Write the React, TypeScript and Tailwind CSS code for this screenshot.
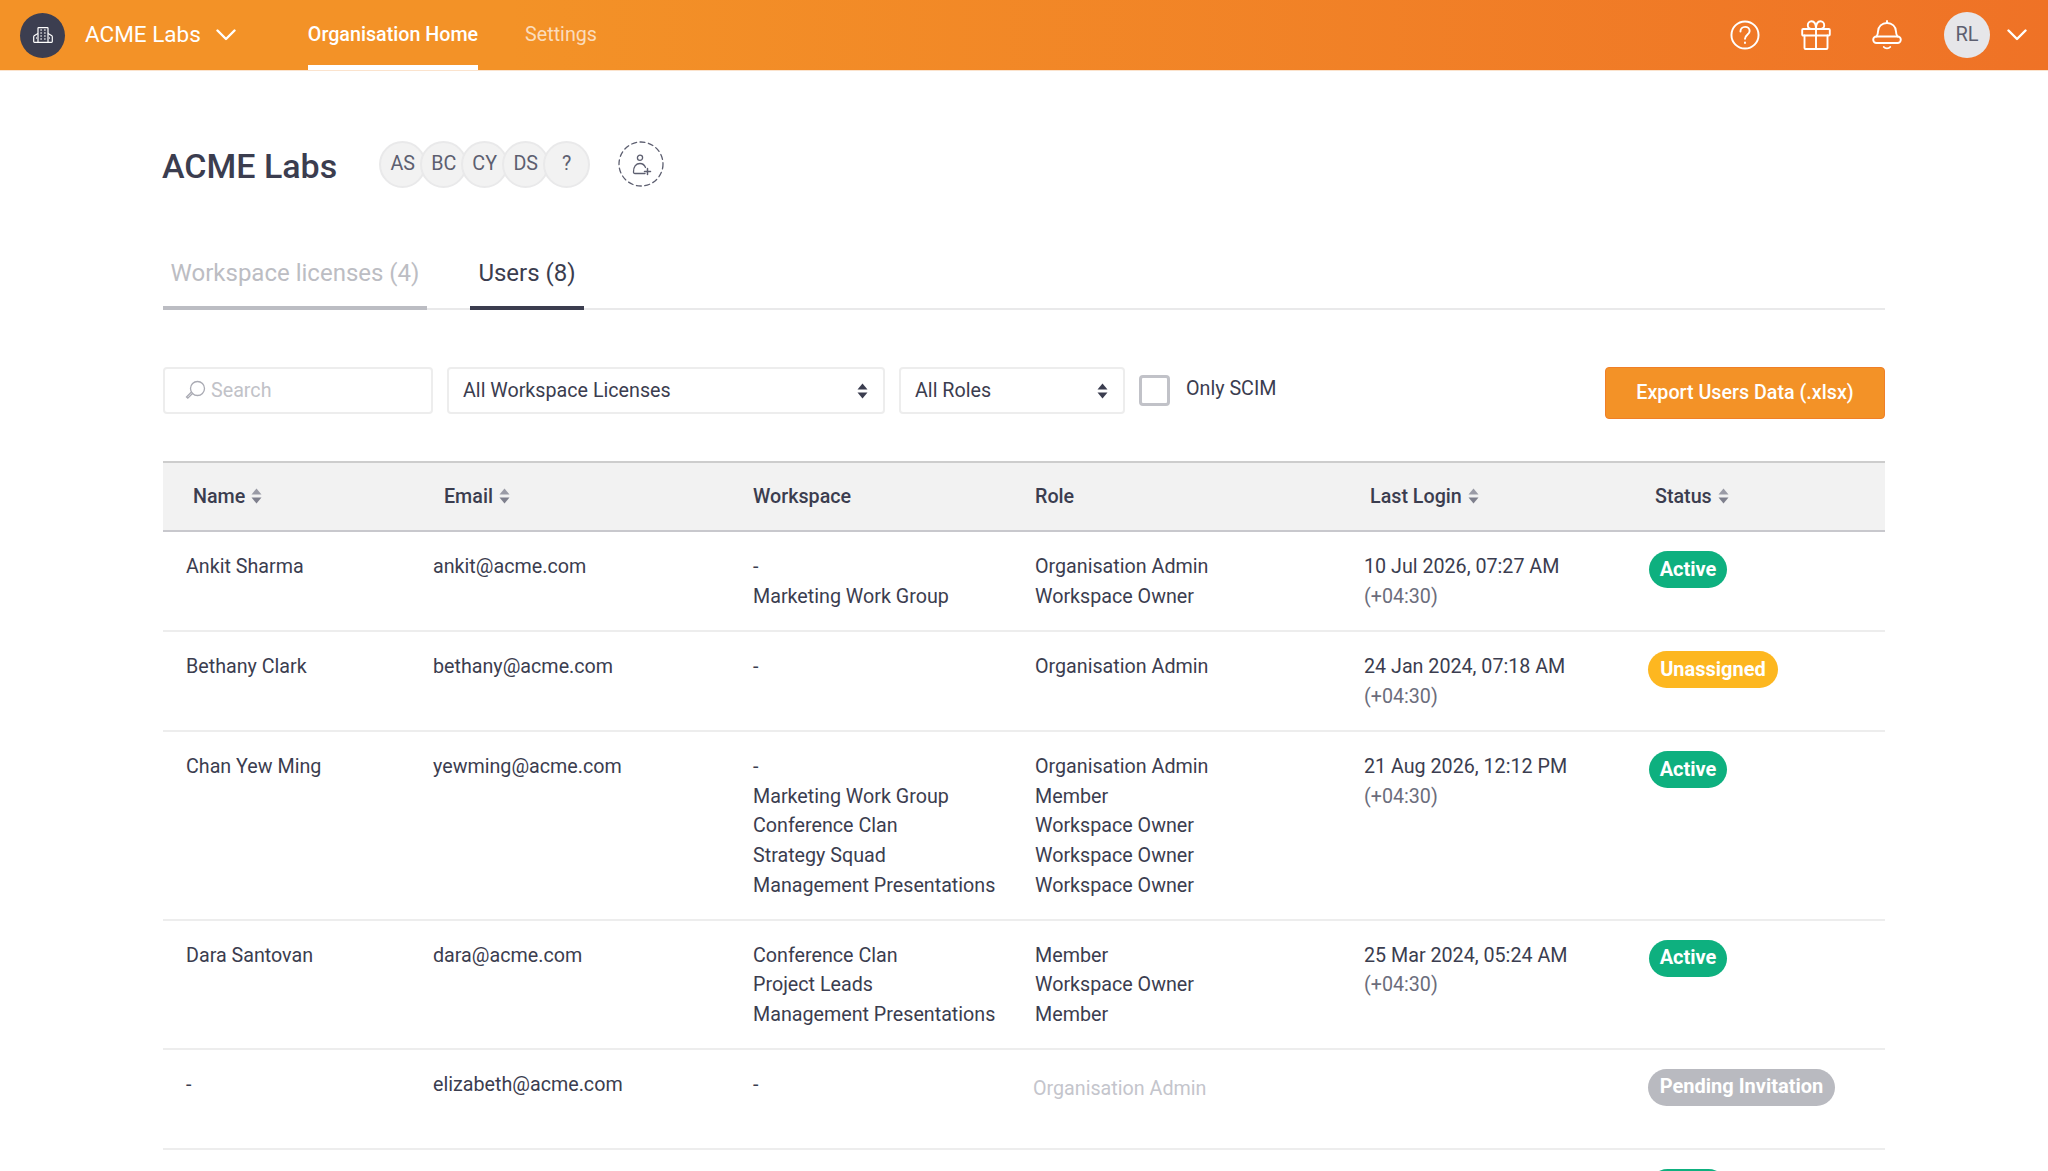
import React from "react";

const Sort = () => (
  <svg width="11" height="18" viewBox="0 0 11 18" className="ml-[6px] shrink-0">
    <path d="M5.5 1.5 L10.5 7.5 H0.5 Z" fill="#9a9ba6" />
    <path d="M0.5 10.5 H10.5 L5.5 16.5 Z" fill="#7f808d" />
  </svg>
);

const Updown = () => (
  <svg width="11" height="16" viewBox="0 0 11 16" className="shrink-0">
    <path d="M5.5 0.5 L10.5 6.5 H0.5 Z" fill="#3b3d4f" />
    <path d="M0.5 9.5 H10.5 L5.5 15.5 Z" fill="#3b3d4f" />
  </svg>
);

const Chevron = ({ w = 20 }: { w?: number }) => (
  <svg width={w} height={w * 0.6} viewBox="0 0 20 12" fill="none" stroke="#fff" strokeWidth="2.4" strokeLinecap="round" strokeLinejoin="round">
    <path d="M1.5 1.5 L10 10 L18.5 1.5" />
  </svg>
);

const Building = () => (
  <svg width="20" height="16" viewBox="0 0 20 16" fill="none" stroke="#fff" strokeWidth="1.2" strokeLinejoin="round">
    <path d="M5 15.4 V1.2 C5 .8 5.300 .6 5.600 .6 H14.400 C14.700 .6 15 .8 15 1.200 V15.400" />
    <path d="M5 6.500 L1.500 8.500 C1 8.800 .7 9.200 .7 9.800 V14.600 C.7 15.100 1 15.400 1.500 15.400 H18.500 C19 15.400 19.300 15.100 19.300 14.600 V9.800 C19.300 9.200 19 8.800 18.500 8.500 L15 6.500" />
    <path d="M7.500 3h1.200M11.300 3h1.200M7.500 6h1.200M11.300 6h1.200M7.500 9h1.200M11.300 9h1.200M7.500 12h1.200M11.300 12h1.200M3 11h.8M16.200 11h.8" strokeWidth="1.500" />
  </svg>
);

const Help = () => (
  <svg width="30" height="30" viewBox="0 0 31 31" fill="none" stroke="#fff" strokeWidth="2" strokeLinecap="round">
    <circle cx="15.5" cy="15.5" r="14" />
    <path d="M10.8 11.8c0-2.8 2.1-4.7 4.8-4.7 2.7 0 4.7 1.8 4.7 4.3 0 3.9-4.8 4-4.8 8" />
    <path d="M15.5 23.3v.4" />
  </svg>
);

const Gift = () => (
  <svg width="30" height="30" viewBox="0 0 30 30" fill="none" stroke="#fff" strokeWidth="1.9" strokeLinecap="round" strokeLinejoin="round">
    <rect x="1.200" y="9" width="27.600" height="6.500" rx="1" />
    <path d="M3.500 15.500 V28 C3.500 28.600 3.900 29 4.500 29 H25.500 C26.100 29 26.500 28.600 26.500 28 V15.500" />
    <path d="M15 9 V29" />
    <path d="M15 9 H10.500 C8.200 9 6.800 7.400 6.800 5.300 C6.800 3 8.500 1.200 10.500 1.200 C13 1.200 15 4 15 9 Z" />
    <path d="M15 9 H19.500 C21.800 9 23.200 7.400 23.200 5.300 C23.200 3 21.500 1.200 19.500 1.200 C17 1.200 15 4 15 9 Z" />
  </svg>
);

const Bell = () => (
  <svg width="30" height="30" viewBox="0 0 30 30" fill="none" stroke="#fff" strokeWidth="1.9" strokeLinecap="round" strokeLinejoin="round">
    <path d="M15 1 V3" />
    <path d="M4.500 16.500 C5.800 14.500 6 13 6 11.500 C6 6.500 10 3 15 3 C20 3 24 6.500 24 11.500 C24 13 24.200 14.500 25.500 16.500" />
    <rect x="1.200" y="16.500" width="27.600" height="6.500" rx="3.200" />
    <path d="M11.800 27 C13.300 28.800 16.700 28.800 18.200 27" />
  </svg>
);

const SearchIcon = () => (
  <svg width="21" height="21" viewBox="0 0 21 21" fill="none" stroke="#a9aab3" strokeWidth="1.3" strokeLinecap="round">
    <circle cx="12.5" cy="8.5" r="7" />
    <path d="M7.5 13.5 L2.8 18.2 L1.5 17 L6.200 12.300" />
  </svg>
);

const AddUser = () => (
  <svg width="46" height="46" viewBox="0 0 46 46" fill="none" stroke="#5d5f70" strokeWidth="1.3" strokeLinecap="round">
    <circle cx="23" cy="23" r="22" strokeDasharray="5 3.500" />
    <g transform="translate(14.500 14)">
      <circle cx="7.500" cy="2.800" r="2.600" />
      <path d="M12.500 18.500 H2.500 C1.500 18.500 1 18 1 17 C1 11.500 3.500 8.500 7.500 8.500 C10 8.500 12 10 13 12.500" />
      <path d="M15 13.500 V19.500 M12 16.500 H18" strokeWidth="1.500" />
    </g>
  </svg>
);

const Badge = ({ label, color, w }: { label: string; color: string; w: string }) => (
  <span className={`inline-flex h-[37px] items-center justify-center rounded-full text-[20px] font-bold text-white ${color} ${w}`}>
    {label}
  </span>
);

type Row = {
  name: string;
  email: string;
  workspace: string[];
  role: string[];
  disabledRole?: boolean;
  login?: string;
  status: "active" | "unassigned" | "pending";
};

const rows: Row[] = [
  { name: "Ankit Sharma", email: "ankit@acme.com", workspace: ["-", "Marketing Work Group"], role: ["Organisation Admin", "Workspace Owner"], login: "10 Jul 2026, 07:27 AM", status: "active" },
  { name: "Bethany Clark", email: "bethany@acme.com", workspace: ["-"], role: ["Organisation Admin"], login: "24 Jan 2024, 07:18 AM", status: "unassigned" },
  { name: "Chan Yew Ming", email: "yewming@acme.com", workspace: ["-", "Marketing Work Group", "Conference Clan", "Strategy Squad", "Management Presentations"], role: ["Organisation Admin", "Member", "Workspace Owner", "Workspace Owner", "Workspace Owner"], login: "21 Aug 2026, 12:12 PM", status: "active" },
  { name: "Dara Santovan", email: "dara@acme.com", workspace: ["Conference Clan", "Project Leads", "Management Presentations"], role: ["Member", "Workspace Owner", "Member"], login: "25 Mar 2024, 05:24 AM", status: "active" },
  { name: "-", email: "elizabeth@acme.com", workspace: ["-"], role: ["Organisation Admin"], disabledRole: true, status: "pending" },
];

const StatusBadge = ({ s }: { s: Row["status"] }) => {
  if (s === "active") return <Badge label="Active" color="bg-[#0eb07f]" w="w-[78px]" />;
  if (s === "unassigned") return <Badge label="Unassigned" color="bg-[#fdb720] -ml-[1px]" w="w-[130px]" />;
  return <Badge label="Pending Invitation" color="bg-[#b9bac0] -ml-[1px]" w="w-[187px]" />;
};

const COLS = "grid grid-cols-[278px_312px_282px_329px_285px_1fr]";

export default function App() {
  return (
    <div className="h-[1171px] overflow-hidden bg-white font-['Roboto',sans-serif] text-[19.7px] leading-[29.7px] text-[#3b3d4f]">
      <header className="flex h-[70px] items-center bg-gradient-to-r from-[#f39227] from-25% to-[#ef7226] pl-[20px] pr-[21px] shadow-[0_1px_0_#fbe3cd]">
        <div className="flex h-[45px] w-[45px] items-center justify-center rounded-full bg-[#3c3e50]">
          <Building />
        </div>
        <span className="ml-[20px] text-[22.5px] text-white">ACME Labs</span>
        <span className="ml-[15px]"><Chevron /></span>
        <nav className="ml-[72px] flex h-full items-stretch gap-[47px]">
          <a className="flex items-center border-b-[5px] border-white pt-[5px] font-medium text-white">Organisation Home</a>
          <a className="flex items-center text-white/70">Settings</a>
        </nav>
        <div className="ml-auto flex items-center">
          <Help />
          <span className="ml-[41px]"><Gift /></span>
          <span className="ml-[41px]"><Bell /></span>
          <div className="ml-[42px] flex h-[46px] w-[46px] items-center justify-center rounded-full bg-[#e6e6e9] text-[20px] text-[#5d5f70]">RL</div>
          <span className="ml-[17px]"><Chevron /></span>
        </div>
      </header>

      <main className="px-[163px]">
        <div className="mt-[71px] flex h-[46px] items-center">
          <h1 className="-ml-[1px] pt-[3px] text-[34px] font-medium leading-[40px]">ACME Labs</h1>
          <div className="ml-[42px] flex">
            {["AS", "BC", "CY", "DS", "?"].map((a, i) => (
              <div key={a} className={`flex h-[47px] w-[47px] items-center justify-center rounded-full border-2 border-[#e9e9ea] bg-[#f2f2f2] text-[#5d5f70] ${i ? "-ml-[6px]" : ""}`}>
                {a}
              </div>
            ))}
          </div>
          <div className="ml-[28px] h-[46px] w-[46px]">
            <AddUser />
          </div>
        </div>

        <div className="mt-[56px] flex h-[67px] items-stretch border-b-2 border-[#e9e9ea]">
          <div className="-mb-[2px] flex w-[264px] items-start justify-center border-b-[4px] border-[#bcbdc3] pt-[16px] text-[24px] text-[#bcbdc3]">Workspace licenses (4)</div>
          <div className="-mb-[2px] ml-[43px] flex w-[114px] items-start justify-center border-b-[4px] border-[#3b3d4f] pt-[16px] text-[24px]">Users (8)</div>
        </div>

        <div className="mt-[57px] flex items-start">
          <div className="flex h-[47px] w-[270px] items-center rounded-[4px] border-2 border-[#ededed] pl-[20px] text-[#c1c2c8]">
            <SearchIcon />
            <span className="ml-[5px]">Search</span>
          </div>
          <div className="ml-[14px] flex h-[47px] w-[438px] items-center justify-between rounded-[4px] border-2 border-[#ededed] pl-[14px] pr-[15px]">
            All Workspace Licenses <Updown />
          </div>
          <div className="ml-[14px] flex h-[47px] w-[226px] items-center justify-between rounded-[4px] border-2 border-[#ededed] pl-[14px] pr-[15px]">
            All Roles <Updown />
          </div>
          <div className="ml-[14px] mt-[8px] h-[31px] w-[31px] rounded-[4px] border-[3px] border-[#c1c2c8]" />
          <span className="ml-[16px] mt-[7px]">Only SCIM</span>
          <button className="ml-auto h-[52px] w-[280px] rounded-[4px] border border-[#f07f27] bg-[#f39227] font-medium text-white">
            Export Users Data (.xlsx)
          </button>
        </div>

        <div className={`${COLS} mt-[42px] h-[71px] items-center border-y-2 border-t-[#cdcdcd] border-b-[#c8c8cd] bg-[#f2f2f2] font-medium`}>
          <div className="flex items-center pl-[30px]">Name<Sort /></div>
          <div className="flex items-center pl-[3px]">Email<Sort /></div>
          <div>Workspace</div>
          <div>Role</div>
          <div className="flex items-center pl-[6px]">Last Login<Sort /></div>
          <div className="flex items-center pl-[6px]">Status<Sort /></div>
        </div>

        {rows.map((r) => (
          <div key={r.email} className={`${COLS} min-h-[100px] border-b-2 border-[#ededed] pt-[20px] pb-[18px]`}>
            <div className="pl-[23px] -mr-[23px]">{r.name}</div>
            <div className="-ml-[8px]">{r.email}</div>
            <div>{r.workspace.map((w, i) => <div key={i}>{w}</div>)}</div>
            <div className={r.disabledRole ? "-ml-[2px] mt-[4px] text-[#c4c5cc]" : ""}>{r.role.map((w, i) => <div key={i}>{w}</div>)}</div>
            <div>
              {r.login && <div>{r.login}</div>}
              {r.login && <div className="text-[#6b6d7c]">(+04:30)</div>}
            </div>
            <div className="-mt-[1px]"><StatusBadge s={r.status} /></div>
          </div>
        ))}
        <div className={`${COLS} pt-[19px]`}>
          <div /><div /><div /><div /><div />
          <div><Badge label="" color="bg-[#0eb07f]" w="w-[78px]" /></div>
        </div>
      </main>
    </div>
  );
}
